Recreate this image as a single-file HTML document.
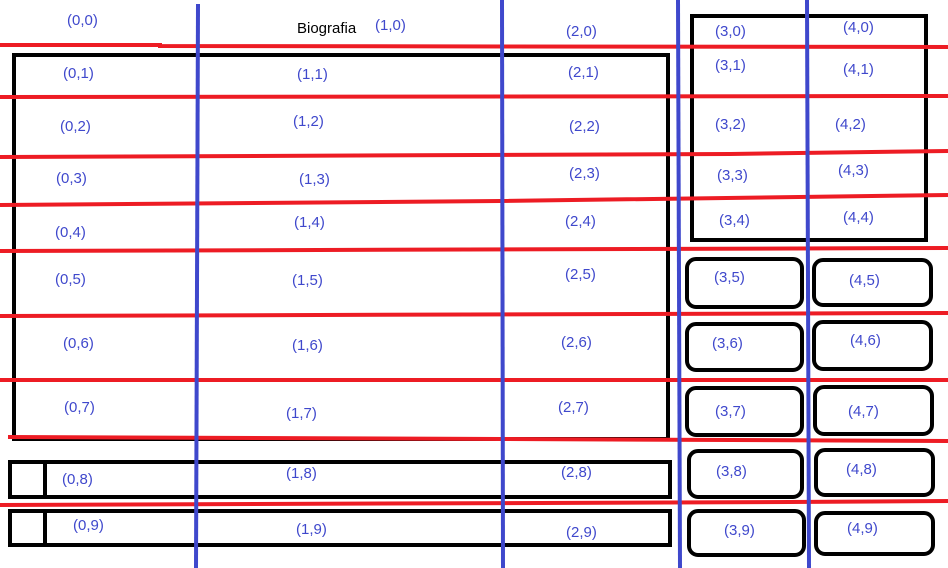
<!DOCTYPE html>
<html><head><style>
html,body{margin:0;padding:0;background:#fff;}
svg{display:block}
text{font-family:"Liberation Sans",sans-serif;font-size:15px;fill:#3F48CC}
</style></head><body>
<svg width="948" height="568" viewBox="0 0 948 568" xmlns="http://www.w3.org/2000/svg">
<g fill="none" stroke="#000" stroke-width="4">
<rect x="14" y="55" width="654" height="384"/>
<rect x="10" y="462" width="660" height="35"/>
<rect x="10" y="462" width="35" height="35"/>
<rect x="10" y="511" width="660" height="34"/>
<rect x="10" y="511" width="35" height="34"/>
<rect x="692" y="16" width="234" height="224"/>
<rect x="687" y="259" width="115" height="48" rx="9"/>
<rect x="814" y="260" width="117" height="45" rx="9"/>
<rect x="687" y="324" width="115" height="46" rx="9"/>
<rect x="814" y="322" width="117" height="47" rx="9"/>
<rect x="687" y="388" width="115" height="47" rx="9"/>
<rect x="815" y="387" width="117" height="47" rx="9"/>
<rect x="689" y="451" width="113" height="46" rx="9"/>
<rect x="816" y="450" width="117" height="45" rx="9"/>
<rect x="689" y="511" width="115" height="44" rx="9"/>
<rect x="816" y="513" width="117" height="41" rx="9"/>
</g>
<g stroke="#ED1C24" stroke-width="4" fill="none">
<polyline points="0,45 160,45 160,46 948,47"/>
<polyline points="0,97 948,96"/>
<polyline points="0,157 730,154 948,151"/>
<polyline points="0,205 500,201 948,195"/>
<polyline points="0,251 948,248"/>
<polyline points="0,316 948,313"/>
<polyline points="0,380 948,380"/>
<polyline points="8,437 500,439 948,441"/>
<polyline points="0,505 790,502 948,501"/>
</g>
<g stroke="#3F48CC" stroke-width="4" fill="none">
<line x1="198" y1="4" x2="196" y2="568"/>
<line x1="502" y1="0" x2="503" y2="568"/>
<line x1="678" y1="0" x2="680" y2="568"/>
<line x1="807" y1="0" x2="809" y2="568"/>
</g>
<text x="297" y="33" style="fill:#000">Biografia</text>
<text x="67" y="25">(0,0)</text><text x="375" y="30">(1,0)</text><text x="566" y="36">(2,0)</text><text x="715" y="36">(3,0)</text><text x="843" y="32">(4,0)</text>
<text x="63" y="78">(0,1)</text><text x="297" y="79">(1,1)</text><text x="568" y="77">(2,1)</text><text x="715" y="70">(3,1)</text><text x="843" y="74">(4,1)</text>
<text x="60" y="131">(0,2)</text><text x="293" y="126">(1,2)</text><text x="569" y="131">(2,2)</text><text x="715" y="129">(3,2)</text><text x="835" y="129">(4,2)</text>
<text x="56" y="183">(0,3)</text><text x="299" y="184">(1,3)</text><text x="569" y="178">(2,3)</text><text x="717" y="180">(3,3)</text><text x="838" y="175">(4,3)</text>
<text x="55" y="237">(0,4)</text><text x="294" y="227">(1,4)</text><text x="565" y="226">(2,4)</text><text x="719" y="225">(3,4)</text><text x="843" y="222">(4,4)</text>
<text x="55" y="284">(0,5)</text><text x="292" y="285">(1,5)</text><text x="565" y="279">(2,5)</text><text x="714" y="282">(3,5)</text><text x="849" y="285">(4,5)</text>
<text x="63" y="348">(0,6)</text><text x="292" y="350">(1,6)</text><text x="561" y="347">(2,6)</text><text x="712" y="348">(3,6)</text><text x="850" y="345">(4,6)</text>
<text x="64" y="412">(0,7)</text><text x="286" y="418">(1,7)</text><text x="558" y="412">(2,7)</text><text x="715" y="416">(3,7)</text><text x="848" y="416">(4,7)</text>
<text x="62" y="484">(0,8)</text><text x="286" y="478">(1,8)</text><text x="561" y="477">(2,8)</text><text x="716" y="476">(3,8)</text><text x="846" y="474">(4,8)</text>
<text x="73" y="530">(0,9)</text><text x="296" y="534">(1,9)</text><text x="566" y="537">(2,9)</text><text x="724" y="535">(3,9)</text><text x="847" y="533">(4,9)</text>
</svg>
</body></html>
